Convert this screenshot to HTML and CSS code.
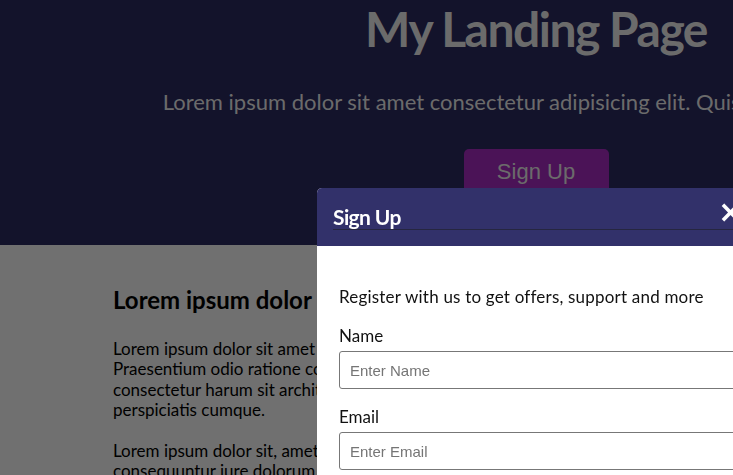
FILE: index.html
```html
<!DOCTYPE html>
<html lang="en">
<head>
<meta charset="utf-8">
<title>My Landing Page</title>
<link rel="stylesheet" href="styles.css">
</head>
<body>
<header class="hero">
  <div class="hero-inner">
    <h1 class="hero-title">My Landing Page</h1>
    <p class="hero-lead">Lorem ipsum dolor sit amet consectetur adipisicing elit. Quisquam voluptatum</p>
    <button class="hero-btn">Sign Up</button>
  </div>
</header>
<main class="content">
  <div class="content-inner">
    <h2 class="content-title">Lorem ipsum dolor sit amet consectetur</h2>
    <p>Lorem ipsum dolor sit amet consectetur adipisicing elit. Praesentium odio ratione corporis dolores nesciunt quasi consectetur harum sit architecto voluptatibus quae amet perspiciatis cumque.</p>
    <p>Lorem ipsum dolor sit, amet consectetur adipisicing elit. consequuntur iure dolorum aliquid, ipsam quis.</p>
  </div>
</main>
<div class="backdrop"></div>
<div class="modal">
  <div class="modal-header">
    <h2 class="modal-title">Sign Up</h2>
    <span class="modal-close">&times;</span>
  </div>
  <div class="modal-body">
    <p class="modal-text">Register with us to get offers, support and more</p>
    <label class="field-label" for="name">Name</label>
    <input class="field-input" id="name" type="text" placeholder="Enter Name">
    <label class="field-label" for="email">Email</label>
    <input class="field-input" id="email" type="email" placeholder="Enter Email">
  </div>
</div>
</body>
</html>
```

FILE: styles.css
```css
* { box-sizing: border-box; }
html, body { margin: 0; padding: 0; overflow: hidden; }
body {
  font-family: Lato, "Noto Sans", sans-serif;
  width: 733px;
  height: 475px;
  background: #e0e0e0;
}
.hero {
  background: #262656;
  height: 245px;
  overflow: hidden;
}
.hero-inner {
  width: 1072px;
  display: flex;
  flex-direction: column;
  align-items: center;
  text-align: center;
}
.hero-title {
  margin: 0;
  padding-top: 1px;
  font-size: 48px;
  font-weight: 700;
  line-height: 56px;
  letter-spacing: -1.5px;
  color: #d6d6d6;
}
.hero-lead {
  margin: 30px 0 0;
  font-size: 22px;
  line-height: 30px;
  white-space: nowrap;
  color: #d6d6d6;
}
.hero-btn {
  margin-top: 32px;
  width: 145px;
  height: 50px;
  border: none;
  border-radius: 5px;
  background: #9626ae;
  color: #d6d6d6;
  font-family: "Liberation Sans", Arial, sans-serif;
  font-size: 22px;
  padding: 0 0 4px;
}
.content {
  height: 230px;
  overflow: hidden;
  padding: 40px 0 0 113px;
}
.content-inner { width: 440px; }
.content-title {
  margin: 0 0 24px;
  font-size: 24px;
  line-height: 30px;
  font-weight: 700;
  color: #000;
  white-space: nowrap;
}
.content p {
  margin: 0 0 21px;
  font-size: 17px;
  line-height: 20.3px;
  color: #000;
}
.backdrop {
  position: fixed;
  inset: 0;
  background: rgba(0, 0, 0, 0.5);
}
.modal {
  position: fixed;
  left: 317px;
  top: 188px;
  width: 520px;
  height: 287px;
  background: #fff;
  border-radius: 5px 5px 0 0;
  overflow: hidden;
}
.modal-header {
  background: #32316a;
  height: 58px;
  padding: 0 16px;
  display: flex;
  align-items: flex-start;
  justify-content: space-between;
}
.modal-title {
  flex: 1;
  margin: 0;
  padding-top: 16px;
  height: 42px;
  font-size: 21px;
  line-height: 26px;
  font-weight: 700;
  color: #fff;
  letter-spacing: -0.6px;
  border-bottom: 1px solid #262640;
}
.modal-close {
  position: absolute;
  left: 401px;
  top: 7px;
  color: #fff;
  font-family: "DejaVu Sans", sans-serif;
  font-weight: 700;
  font-size: 30px;
  line-height: 34px;
}
.modal-body {
  padding: 41px 22px 0;
  display: flex;
  flex-direction: column;
}
.modal-text {
  margin: 0 0 19px;
  font-size: 17px;
  line-height: 20px;
  letter-spacing: 0.2px;
  color: #111;
}
.field-label {
  font-size: 17px;
  line-height: 20px;
  color: #111;
  margin-bottom: 5px;
}
.field-input {
  height: 38px;
  border: 1px solid #777;
  border-radius: 3px;
  padding: 0 10px;
  font-family: "Liberation Sans", Arial, sans-serif;
  font-size: 15px;
  margin-bottom: 18px;
}
.field-input::placeholder { color: #757575; }
```
